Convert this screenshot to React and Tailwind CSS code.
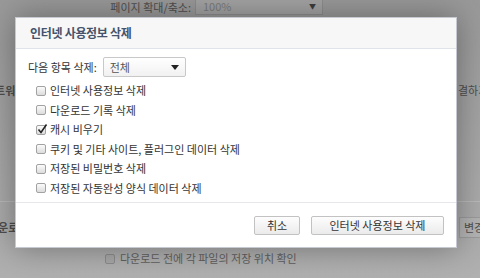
const font = { fontFamily: '"Noto Sans CJK KR", "Noto Sans", sans-serif' };

const items = [
  { label: '인터넷 사용정보 삭제', checked: false },
  { label: '다운로드 기록 삭제', checked: false },
  { label: '캐시 비우기', checked: true },
  { label: '쿠키 및 기타 사이트, 플러그인 데이터 삭제', checked: false },
  { label: '저장된 비밀번호 삭제', checked: false },
  { label: '저장된 자동완성 양식 데이터 삭제', checked: false },
];

const Box = ({ checked, dim }) => (
  <span
    className={`relative inline-block h-[10px] w-[10px] shrink-0 rounded-[2px] border ${
      dim ? 'border-[#8c8c8c] bg-[#a8a8a8]' : 'border-[#a2a2a2] bg-gradient-to-b from-[#fbfbfb] to-[#dcdcdc]'
    }`}
  >
    {checked && (
      <svg className="absolute left-[0px] top-[-3px]" width="11" height="12" viewBox="0 0 11 12">
        <path d="M1.5 6.5 L4 9.5 L9.5 1.5" fill="none" stroke="#222" strokeWidth="1.6" />
      </svg>
    )}
  </span>
);

const Button = ({ children, className = '' }) => (
  <button
    className={`h-[19px] rounded-[2px] border border-[#c2c2c2] bg-gradient-to-b from-[#fdfdfd] to-[#ebebeb] text-[11px] leading-none text-[#333] ${className}`}
  >
    {children}
  </button>
);

const App = () => {
  return (
    <div
      className="relative h-[278px] w-[480px] overflow-hidden bg-gradient-to-b from-[#999999] to-[#b0b0b0] text-[11px] text-[#4e4e4e]"
      style={font}
    >
      {/* page behind the overlay */}
      <div className="flex h-full flex-col">
        <div className="flex h-[15px] items-center">
          <span className="w-[191px] text-right leading-none">페이지 확대/축소:</span>
          <div className="ml-[4px] flex h-[16px] w-[128px] -translate-y-[1px] items-center border-x border-b border-[#8d8d8d] bg-[#a3a3a3] pl-[7px] pr-[6px]">
            <span className="text-[#7b7b7b]">100%</span>
            <span className="ml-auto text-[7px] text-[#3c3c3c]">▼</span>
          </div>
        </div>
        <div className="mt-[68px] flex h-[14px] items-center justify-between">
          <span className="-ml-[15px] font-bold leading-none">네트워크</span>
          <span className="w-[22px] overflow-hidden whitespace-nowrap leading-none">결하기</span>
        </div>
        <div className="mt-[104px] h-px bg-[#b9b9b9]"></div>
        <div className="mt-[15px] flex h-[21px] items-center justify-between">
          <span className="-ml-[12px] font-bold leading-none">다운로드</span>
          <div className="-mr-[20px] flex h-[21px] w-[41px] shrink-0 items-center whitespace-nowrap border border-[#9b9b9b] bg-[#b3b3b3] pl-[4px]">
            <span className="leading-none">변경</span>
          </div>
        </div>
        <div className="mt-[15px] flex items-center gap-[5px] pl-[105px]">
          <Box dim />
          <span className="leading-none text-[#606060]">다운로드 전에 각 파일의 저장 위치 확인</span>
        </div>
      </div>

      {/* dialog */}
      <div className="absolute left-[15px] top-[17px] flex h-[231px] w-[442px] flex-col border border-[#c6c9d0] bg-white shadow-[0_0_30px_rgba(0,0,0,0.35)]">
        <div className="flex h-[31px] items-center border-b border-[#e1e3ea] bg-[#f7f7f8] pl-[14px]">
          <span className="text-[12px] font-bold tracking-[-0.3px] text-[#45536b]">인터넷 사용정보 삭제</span>
        </div>
        <div className="flex flex-1 flex-col pl-[12px] pt-[8px] text-[#333]">
          <div className="flex items-center">
            <span className="leading-none">다음 항목 삭제:</span>
            <div className="ml-[6px] flex h-[20px] w-[83px] items-center rounded-[2px] border border-[#c8c8c8] bg-gradient-to-b from-white to-[#f1f1f1] pl-[6px] pr-[6px]">
              <span className="leading-none text-[#555]">전체</span>
              <svg className="ml-auto" width="8" height="5" viewBox="0 0 8 5">
                <path d="M0 0 H8 L4 5 Z" fill="#222" />
              </svg>
            </div>
          </div>
          <div className="mt-[4px] flex flex-col pl-[8px]">
            {items.map((it) => (
              <div key={it.label} className="flex h-[19.5px] items-center gap-[4px]">
                <Box checked={it.checked} />
                <span className="leading-none">{it.label}</span>
              </div>
            ))}
          </div>
        </div>
        <div className="flex h-[45px] items-start justify-end gap-[11px] border-t border-[#e6e7ec] pr-[12px] pt-[13px]">
          <Button className="w-[46px]">취소</Button>
          <Button className="w-[133px]">인터넷 사용정보 삭제</Button>
        </div>
      </div>
    </div>
  );
};

export default App;
